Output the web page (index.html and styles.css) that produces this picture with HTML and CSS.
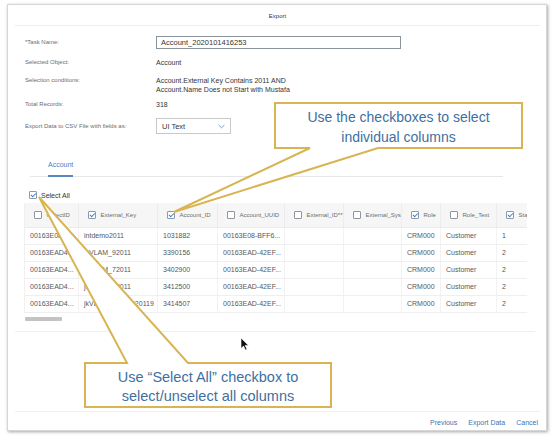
FILE: index.html
```html
<!DOCTYPE html>
<html>
<head>
<meta charset="utf-8">
<link rel="stylesheet" href="styles.css">
</head>
<body>
<div class="page">
  <div class="dialog">
    <div class="dlg-head">Export</div>
    <div class="form">
      <div class="frow r1"><div class="lbl">*Task Name:</div><div class="input">Account_2020101416253</div></div>
      <div class="frow r2"><div class="lbl">Selected Object:</div><div class="val">Account</div></div>
      <div class="frow r3"><div class="lbl">Selection conditions:</div><div class="val">Account.External Key Contains 2011 AND<br>Account.Name Does not Start with Mustafa</div></div>
      <div class="frow r4"><div class="lbl">Total Records:</div><div class="val">318</div></div>
      <div class="frow r5"><div class="lbl">Export Data to CSV File with fields as:</div>
        <div class="select"><span>UI Text</span><svg class="chev" width="7" height="5" viewBox="0 0 7 5"><path d="M0.6 1 L3.5 3.8 L6.4 1" fill="none" stroke="#6b90c2" stroke-width="0.9"/></svg></div>
      </div>
    </div>
    <div class="tabs"><div class="tab">Account</div></div>
    <div class="selall"><span class="cb on"></span><span>Select All</span></div>
    <div class="table">
      <div class="trow thead">
        <div class="th"><span class="cb"></span><span>ObjectID</span></div>
        <div class="th"><span class="cb on"></span><span>External_Key</span></div>
        <div class="th"><span class="cb on"></span><span>Account_ID</span></div>
        <div class="th"><span class="cb"></span><span>Account_UUID</span></div>
        <div class="th"><span class="cb"></span><span>External_ID**</span></div>
        <div class="th"><span class="cb"></span><span>External_Syst</span></div>
        <div class="th"><span class="cb on"></span><span>Role</span></div>
        <div class="th"><span class="cb"></span><span>Role_Text</span></div>
        <div class="th"><span class="cb on"></span><span>Sta</span></div>
      </div>
      <div class="trow">
        <div class="td">00163E08...</div><div class="td">intdemo2011</div><div class="td">1031882</div><div class="td">00163E08-BFF6...</div><div class="td"></div><div class="td"></div><div class="td">CRM000</div><div class="td">Customer</div><div class="td">1</div>
      </div>
      <div class="trow">
        <div class="td">00163EAD4...</div><div class="td">jkVLAM_92011</div><div class="td">3390156</div><div class="td">00163EAD-42EF...</div><div class="td"></div><div class="td"></div><div class="td">CRM000</div><div class="td">Customer</div><div class="td">2</div>
      </div>
      <div class="trow">
        <div class="td">00163EAD4...</div><div class="td">jkVLAM_72011</div><div class="td">3402900</div><div class="td">00163EAD-42EF...</div><div class="td"></div><div class="td"></div><div class="td">CRM000</div><div class="td">Customer</div><div class="td">2</div>
      </div>
      <div class="trow">
        <div class="td">00163EAD4...</div><div class="td">jkVLAM_32011</div><div class="td">3412500</div><div class="td">00163EAD-42EF...</div><div class="td"></div><div class="td"></div><div class="td">CRM000</div><div class="td">Customer</div><div class="td">2</div>
      </div>
      <div class="trow">
        <div class="td">00163EAD4...</div><div class="td">jkVLAM_20112020119</div><div class="td">3414507</div><div class="td">00163EAD-42EF...</div><div class="td"></div><div class="td"></div><div class="td">CRM000</div><div class="td">Customer</div><div class="td">2</div>
      </div>
    </div>
    <div class="hscroll"></div>
    <div class="sep"></div>
    <div class="footer">
      <span class="btn">Previous</span><span class="btn">Export Data</span><span class="btn">Cancel</span>
    </div>
  </div>
</div>
<div class="overlay">
  <svg class="callouts" width="560" height="438" viewBox="0 0 560 438">
    <path d="M275 103 H522 V148 H378 L174 212 L310 148 H275 Z" fill="#fff" stroke="#d8b452" stroke-width="2"/>
    <path d="M85 363 H127 L39 197 L188 363 H331 V407 H85 Z" fill="#fff" stroke="#d8b452" stroke-width="2"/>
    <path d="M241 338 L241 348.5 L243.5 346 L245.4 350 L247 349.2 L245.1 345.4 L248.5 345.4 Z" fill="#111" stroke="#fff" stroke-width="0.6"/>
  </svg>
  <div class="note note-top">Use the checkboxes to select<br>individual columns</div>
  <div class="note note-bottom">Use “Select All” checkbox to<br>select/unselect all columns</div>
</div>
</body>
</html>
```

FILE: styles.css
```css
* { box-sizing: border-box; }
html, body { margin: 0; padding: 0; }
body {
  width: 560px;
  height: 438px;
  background: #fff;
  font-family: "Liberation Sans", Arial, sans-serif;
  color: #32363a;
  position: relative;
  overflow: hidden;
}
.page { padding: 4px 13px 0 7px; }
.dialog {
  width: 540px;
  height: 427px;
  border: 1px solid #d6d6d6;
  box-shadow: 1px 1px 3px rgba(0,0,0,0.35);
  display: flex;
  flex-direction: column;
  background: #fff;
}
.dlg-head {
  height: 21px;
  margin: 0 6px 0 7px;
  padding-top: 2px;
  line-height: 18px;
  font-size: 6px;
  text-align: center;
  color: #32363a;
  border-bottom: 1px solid #eeeeee;
}
.form { margin-top: 9px; padding-left: 17px; }
.frow { display: flex; align-items: center; height: 14px; }
.lbl { width: 131px; flex: none; font-size: 6px; color: #6a6d70; white-space: nowrap; }
.val { font-size: 7px; color: #32363a; }
.r2 { margin-top: 6px; }
.r3 { margin-top: 6.5px; height: auto; align-items: flex-start; }
.r3 .lbl, .r3 .val { line-height: 9px; }
.r4 { margin-top: 3.5px; }
.r5 { margin-top: 7px; height: 16px; }
.input {
  width: 245px;
  height: 13px;
  border: 1px solid #8b939b;
  padding-left: 4px;
  font-size: 7.5px;
  line-height: 11px;
  color: #32363a;
}
.select {
  width: 75px;
  height: 16px;
  border: 1px solid #c9c9c9;
  padding: 0 5px 0 5px;
  display: flex;
  align-items: center;
  justify-content: space-between;
  font-size: 7.5px;
  color: #32363a;
}
.chev { display: block; }
.tabs {
  margin: 21px 0 0 22px;
  width: 473px;
  display: flex;
  align-items: flex-start;
  border-bottom: 1px solid #e6e6e6;
}
.tab {
  margin-left: 18px;
  margin-bottom: -1px;
  line-height: 20px;
  font-size: 7px;
  color: #4b7fbf;
  border-bottom: 2px solid #5a87c1;
}
.selall {
  margin: 13px 0 0 21px;
  height: 10px;
  display: flex;
  align-items: center;
  gap: 4px;
  font-size: 7px;
  color: #32363a;
}
.cb {
  flex: none;
  display: inline-block;
  width: 8px;
  height: 8px;
  border: 1px solid #8e959c;
  border-radius: 1px;
  background: #fff;
  position: relative;
}
.cb.on { border-color: #8a9bb0; }
.cb.on::after {
  content: "";
  position: absolute;
  left: 2.2px;
  top: 0.4px;
  width: 1.8px;
  height: 3.8px;
  border: solid #3a73b8;
  border-width: 0 1px 1px 0;
  transform: rotate(45deg);
}
.table {
  margin: 3px 0 0 16px;
  width: 503px;
  overflow: hidden;
  border-left: 1px solid #f0f0f0;
}
.trow {
  display: grid;
  grid-template-columns: 54px 79px 60px 67px 59px 58px 39px 56px 31px;
  width: 503px;
  height: 17px;
  border-bottom: 1px solid #efefef;
}
.thead { height: 25px; background: #f6f6f6; border-bottom: 1px solid #ebebeb; }
.th {
  display: flex;
  align-items: center;
  gap: 4.5px;
  padding-left: 9px;
  font-size: 6px;
  color: #6a6d70;
  white-space: nowrap;
  overflow: hidden;
  border-right: 1px solid #ececec;
}
.td {
  padding-left: 5px;
  font-size: 7px;
  line-height: 16px;
  color: #55595d;
  white-space: nowrap;
  overflow: hidden;
  border-right: 1px solid #f2f2f2;
}
.hscroll {
  margin: 4px 0 0 17px;
  width: 37px;
  height: 4px;
  border-radius: 1px;
  background: #c3c3c3;
}
.sep {
  margin: 10px 11px 0 7px;
  border-top: 1px solid #efefef;
}
.footer {
  margin: auto 6px 0 7px;
  border-top: 1px solid #efefef;
  padding: 3px 2px 0 0;
  height: 19px;
  line-height: 15px;
  display: flex;
  justify-content: flex-end;
  gap: 11px;
  font-size: 7px;
}
.btn { color: #4173b4; }
.overlay {
  position: absolute;
  left: 0;
  top: 0;
  width: 560px;
  height: 438px;
  pointer-events: none;
}
.callouts { position: absolute; left: 0; top: 0; display: block; }
.note {
  position: absolute;
  text-align: center;
  color: #40709f;
  font-family: "Liberation Sans", Arial, sans-serif;
}
.note-top {
  left: 275px;
  top: 103px;
  width: 247px;
  padding-top: 4px;
  font-size: 14px;
  line-height: 20px;
}
.note-bottom {
  left: 85px;
  top: 363px;
  width: 246px;
  padding-top: 5px;
  font-size: 14.5px;
  line-height: 19px;
}
```
